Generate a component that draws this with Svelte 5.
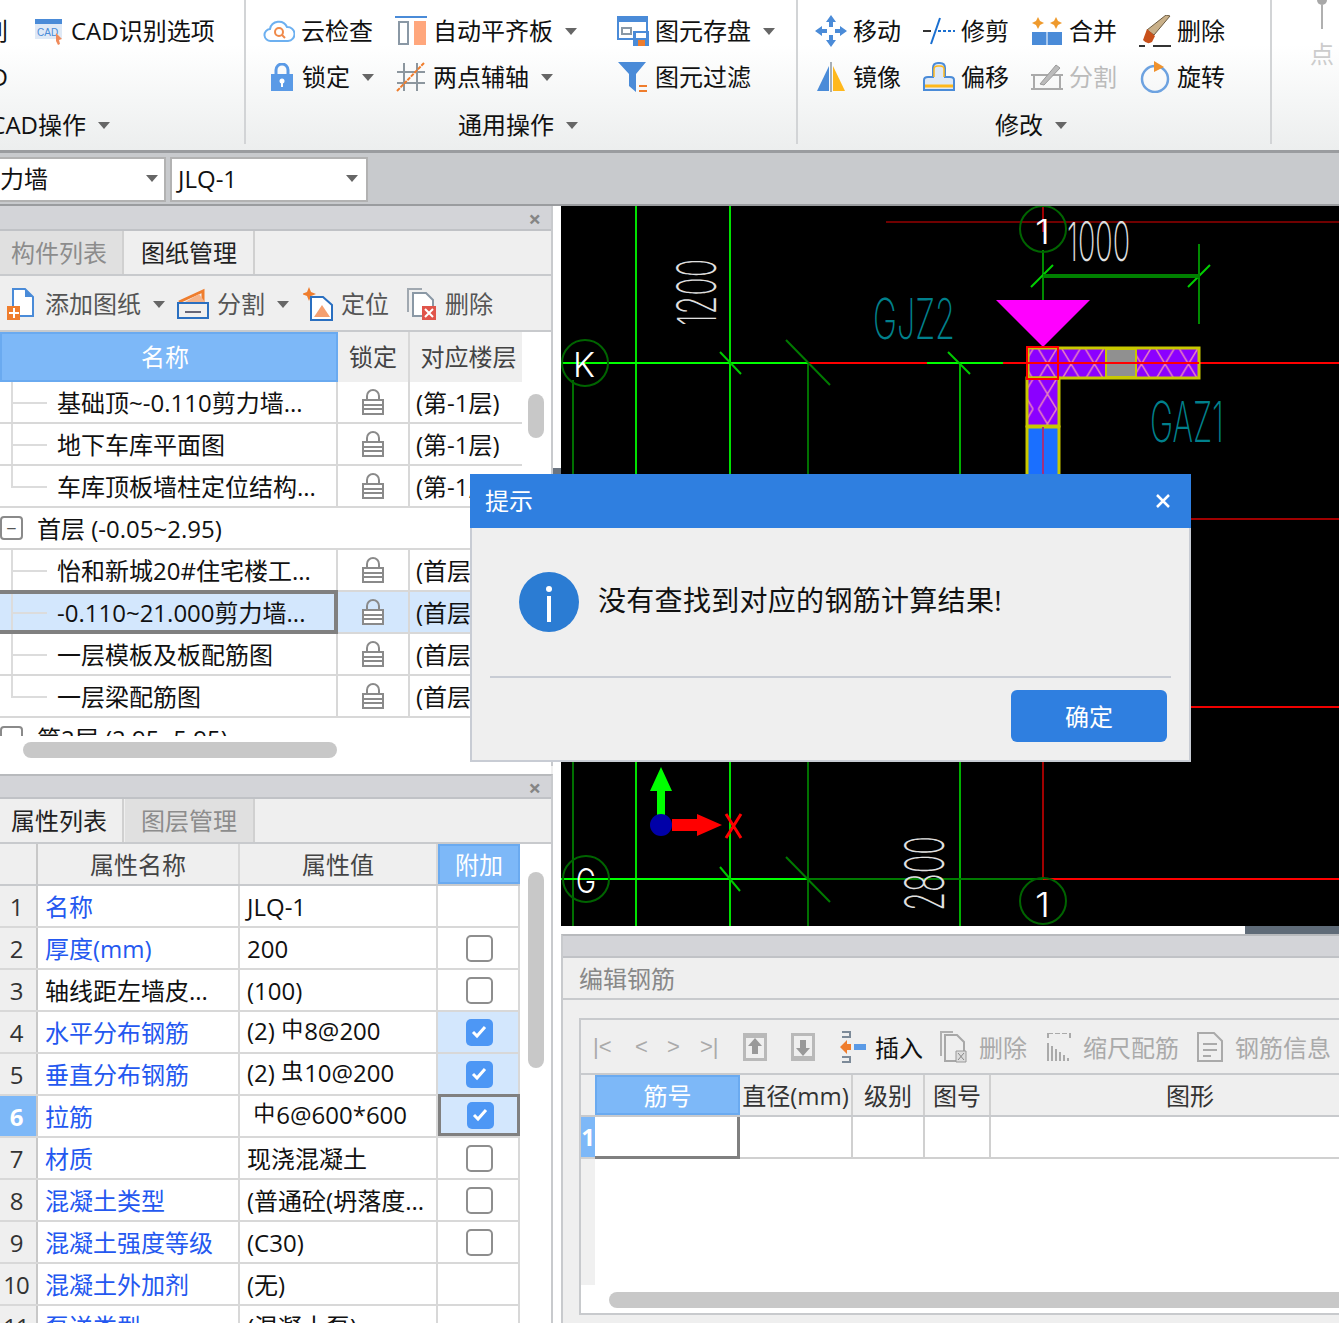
<script>
	const drawings = [
		{ name: '基础顶~-0.110剪力墙...', floor: '(第-1层)' },
		{ name: '地下车库平面图', floor: '(第-1层)' },
		{ name: '车库顶板墙柱定位结构...', floor: '(第-1层)', last: true },
		{ group: '首层 (-0.05~2.95)' },
		{ name: '怡和新城20#住宅楼工...', floor: '(首层)' },
		{ name: '-0.110~21.000剪力墙...', floor: '(首层)', selected: true },
		{ name: '一层模板及板配筋图', floor: '(首层)' },
		{ name: '一层梁配筋图', floor: '(首层)', last: true },
		{ group: '第2层 (2.95~5.95)' }
	];

	const props = [
		{ name: '名称', value: 'JLQ-1', link: true },
		{ name: '厚度(mm)', value: '200', link: true, check: 'off' },
		{ name: '轴线距左墙皮...', value: '(100)', check: 'off' },
		{ name: '水平分布钢筋', pre: '(2) ', mark: '中', value: '8@200', link: true, check: 'on' },
		{ name: '垂直分布钢筋', pre: '(2) ', mark: '虫', value: '10@200', link: true, check: 'on' },
		{ name: '拉筋', pre: ' ', mark: '中', value: '6@600*600', link: true, check: 'on', active: true },
		{ name: '材质', value: '现浇混凝土', link: true, check: 'off' },
		{ name: '混凝土类型', value: '(普通砼(坍落度...', link: true, check: 'off' },
		{ name: '混凝土强度等级', value: '(C30)', link: true, check: 'off' },
		{ name: '混凝土外加剂', value: '(无)', link: true },
		{ name: '泵送类型', value: '(混凝土泵)', link: true }
	];
</script>

{#snippet caret()}
	<i class="caret"></i>
{/snippet}

{#snippet padlock()}
	<svg width="22" height="26" viewBox="0 0 22 26">
		<path d="M5 11V7a6 6 0 0 1 12 0v4" fill="none" stroke="#8a8a8a" stroke-width="2" />
		<path d="M1 11h20v14H1z" fill="#fff" stroke="#8a8a8a" stroke-width="2" />
		<path d="M1 16h20M1 20h20" stroke="#8a8a8a" stroke-width="2" />
	</svg>
{/snippet}

<div class="app">
	<header class="ribbon">
		<section class="group g1">
			<div class="cols">
				<div class="col c-clip">
					<div class="tool end">识别</div>
					<div class="tool end">CAD</div>
				</div>
				<div class="col">
					<div class="tool">
						<span class="ico">
							<svg width="30" height="28" viewBox="0 0 30 28">
								<path d="M1 2h27v20H1z" fill="#dfe9f6" />
								<path d="M1 2h27v5H1z" fill="#4a8bd8" />
								<text x="3" y="19" class="tiny">CAD</text>
								<path d="M22 16l6 6-3 1 1 4-2 1-2-4z" fill="#f08a5a" />
							</svg>
						</span>
						CAD识别选项
					</div>
				</div>
			</div>
			<div class="label l1">CAD操作{@render caret()}</div>
		</section>

		<section class="group g2">
			<div class="cols">
				<div class="col w132">
					<div class="tool">
						<span class="ico">
							<svg width="32" height="24" viewBox="0 0 32 24">
								<path d="M8 22a6 6 0 0 1-1-12 9 9 0 0 1 17-2 7 7 0 0 1 1 14z" fill="#fff" stroke="#6db0f0" stroke-width="2" />
								<circle cx="16" cy="13" r="4" fill="none" stroke="#f08a4a" stroke-width="2" />
								<path d="M19 16l3 3" stroke="#f08a4a" stroke-width="2" />
							</svg>
						</span>
						云检查
					</div>
					<div class="tool">
						<span class="ico lockbox">
							<svg width="22" height="28" viewBox="0 0 22 28">
								<path d="M5 12V7a6 6 0 0 1 12 0v5" fill="none" stroke="#5a9ae6" stroke-width="3" />
								<path d="M0 11h22v17H0z" fill="#5a9ae6" />
								<circle cx="11" cy="18" r="2.5" fill="#fff" />
								<path d="M10 19h2v5h-2z" fill="#fff" />
							</svg>
						</span>
						锁定{@render caret()}
					</div>
				</div>
				<div class="col w222">
					<div class="tool">
						<span class="ico">
							<svg width="32" height="30" viewBox="0 0 32 30">
								<path d="M0 0h32v2H0z" fill="#4a8bd8" />
								<path d="M4 6h9v22H4z" fill="#fff" stroke="#8a98a5" stroke-width="2" />
								<path d="M19 5h12v24H19z" fill="#ffa77d" />
							</svg>
						</span>
						自动平齐板{@render caret()}
					</div>
					<div class="tool">
						<span class="ico">
							<svg width="30" height="30" viewBox="0 0 30 30">
								<path d="M8 1v28M21 1v28M1 10h28M1 21h28" stroke="#8c969e" stroke-width="2" />
								<path d="M1 29L28 1" stroke="#ef7d2d" stroke-width="2" stroke-dasharray="4 1" />
							</svg>
						</span>
						两点辅轴{@render caret()}
					</div>
				</div>
				<div class="col">
					<div class="tool">
						<span class="ico">
							<svg width="32" height="30" viewBox="0 0 32 30">
								<path d="M1 1h29v22H1z" fill="#fff" stroke="#4a8bd8" stroke-width="2" />
								<path d="M1 1h29v5H1z" fill="#4a8bd8" />
								<path d="M5 12h9v6H5z" fill="none" stroke="#8a98a5" stroke-width="2" />
								<path d="M16 15h16v15H16z" fill="#4a8bd8" />
								<path d="M19 17h10v5H19z" fill="#fff" />
								<path d="M21 24h7v6h-7z" fill="#ef7d2d" />
							</svg>
						</span>
						图元存盘{@render caret()}
					</div>
					<div class="tool">
						<span class="ico">
							<svg width="30" height="32" viewBox="0 0 30 32">
								<path d="M0 1h28L18 13v18l-7-6V13z" fill="#4a8bd8" />
								<path d="M21 24h8v2h-8zM21 29h8v2h-8z" fill="#ef7d2d" />
							</svg>
						</span>
						图元过滤
					</div>
				</div>
			</div>
			<div class="label pull">通用操作{@render caret()}</div>
		</section>

		<section class="group g3">
			<div class="cols">
				<div class="col w108">
					<div class="tool">
						<span class="ico">
							<svg width="32" height="32" viewBox="0 0 32 32">
								<path d="M16 0l5 7h-3v7h7v-3l7 5-7 5v-3h-7v7h3l-5 7-5-7h3v-7H7v3l-7-5 7-5v3h7V7h-3z" fill="#4a8bd8" />
								<path d="M12 12h8v8h-8z" fill="#fff" />
							</svg>
						</span>
						移动
					</div>
					<div class="tool">
						<span class="ico">
							<svg width="30" height="32" viewBox="0 0 30 32">
								<path d="M15 1v30" stroke="#8c969e" stroke-width="1.5" />
								<path d="M1 30L13 5v25z" fill="#4a8bd8" />
								<path d="M17 5l12 25H17z" fill="#ffb81c" />
							</svg>
						</span>
						镜像
					</div>
				</div>
				<div class="col w108">
					<div class="tool">
						<span class="ico">
							<svg width="32" height="28" viewBox="0 0 32 28">
								<path d="M0 14h8" stroke="#333" stroke-width="2" />
								<path d="M17 1L8 27" stroke="#1a6fd0" stroke-width="2" />
								<path d="M15 14h17" stroke="#1a6fd0" stroke-width="2" stroke-dasharray="3 2" />
							</svg>
						</span>
						修剪
					</div>
					<div class="tool">
						<span class="ico">
							<svg width="32" height="30" viewBox="0 0 32 30">
								<path d="M1 28V18q0-3 4-3h5V6q0-5 5-5h2q5 0 5 5v9h5q4 0 4 3v10z" fill="#dfe9f6" stroke="#4a8bd8" stroke-width="2" />
								<path d="M2 24h28" stroke="#ffb81c" stroke-width="3" />
								<path d="M11 15V7q0-3 4-3h2q4 0 4 3v8" fill="none" stroke="#ffb81c" stroke-width="1.5" />
							</svg>
						</span>
						偏移
					</div>
				</div>
				<div class="col w108">
					<div class="tool">
						<span class="ico">
							<svg width="30" height="28" viewBox="0 0 30 28">
								<path d="M6 0l2 4 4 2-4 2-2 4-2-4-4-2 4-2zM24 0l2 4 4 2-4 2-2 4-2-4-4-2 4-2z" fill="#ef9a2d" />
								<path d="M0 15h30v13H0z" fill="#4a8bd8" />
								<path d="M14 15h2v13h-2z" fill="#a8c8ee" />
							</svg>
						</span>
						合并
					</div>
					<div class="tool faded">
						<span class="ico">
							<svg width="32" height="30" viewBox="0 0 32 30">
								<path d="M3 13h26v14H3z" fill="none" stroke="#aaa" stroke-width="2" />
								<path d="M0 13h6M26 13h6M0 27h6M26 27h6" stroke="#aaa" stroke-width="2" />
								<path d="M9 22L25 3l4 3-16 17z" fill="#bbb" stroke="#999" />
							</svg>
						</span>
						分割
					</div>
				</div>
				<div class="col">
					<div class="tool">
						<span class="ico">
							<svg width="32" height="32" viewBox="0 0 32 32">
								<path d="M31 1L15 20l-7-5L27 0z" fill="#c9b089" stroke="#6a5a40" />
								<path d="M8 14l8 7-3 6q-5 3-9-2z" fill="#c8501a" />
								<path d="M0 31h6M14 31h18" stroke="#333" stroke-width="2" />
							</svg>
						</span>
						删除
					</div>
					<div class="tool">
						<span class="ico">
							<svg width="30" height="32" viewBox="0 0 30 32">
								<circle cx="15" cy="18" r="13" fill="none" stroke="#6da2e0" stroke-width="2.5" />
								<path d="M14 0v11l10-5z" fill="#f0922d" />
							</svg>
						</span>
						旋转
					</div>
				</div>
			</div>
			<div class="label pull">修改{@render caret()}</div>
		</section>

		<section class="g4">
			<i class="knob"></i>
			<i class="stem"></i>
			<span class="dim">点</span>
		</section>
	</header>

	<div class="selects">
		<div class="select first"><span class="cut">剪力墙</span>{@render caret()}</div>
		<div class="select second"><span>JLQ-1</span>{@render caret()}</div>
	</div>

	<main class="main">
		<aside class="left">
			<section class="panel a">
				<div class="ptitle"><span class="close">×</span></div>
				<div class="tabs">
					<div class="tab off">构件列表</div>
					<div class="tab">图纸管理</div>
				</div>
				<div class="ptools">
					<span class="ptool t1">
						<svg width="28" height="32" viewBox="0 0 28 32">
							<path d="M6 1h12l8 8v19H6z" fill="#fff" stroke="#4a8bd8" stroke-width="2" />
							<path d="M18 1v8h8z" fill="#4a8bd8" />
							<path d="M0 18h13v14H0z" fill="#ef7d2d" />
							<path d="M6 20h2v10H6zM2 24h10v2H2z" fill="#fff" />
						</svg>
						<b>添加图纸</b>{@render caret()}
					</span>
					<span class="ptool t2">
						<svg width="32" height="32" viewBox="0 0 32 32">
							<path d="M2 14L26 3v12" fill="none" stroke="#ef7d2d" stroke-width="3" />
							<path d="M1 15h30v15H1z" fill="none" stroke="#2a6fc0" stroke-width="2" />
							<path d="M8 14l14-8 6 8z" fill="#f5b48a" />
							<path d="M8 24h16" stroke="#667" stroke-width="2" />
						</svg>
						<b>分割</b>{@render caret()}
					</span>
					<span class="ptool t3">
						<svg width="30" height="34" viewBox="0 0 30 34">
							<path d="M6 0l2 5 5 2-5 2-2 5-2-5-5-2 5-2z" fill="#ef7d2d" />
							<path d="M8 10h12l9 8v15H8z" fill="#fff" stroke="#2a6fc0" stroke-width="2" />
							<path d="M11 30l8-12 8 12z" fill="#f5a070" />
						</svg>
						<b>定位</b>
					</span>
					<span class="ptool t4">
						<svg width="30" height="32" viewBox="0 0 30 32">
							<path d="M1 24V1h14" fill="none" stroke="#a0a8b0" stroke-width="2" />
							<path d="M6 5h13l7 7v16H6z" fill="#fff" stroke="#8a98a5" stroke-width="2" />
							<path d="M15 18h14v14H15z" fill="#e0544a" />
							<path d="M18 21l8 8M26 21l-8 8" stroke="#fff" stroke-width="2" />
						</svg>
						<b>删除</b>
					</span>
				</div>
				<div class="tablewrap">
					<div class="drow head">
						<div class="dname sel">名称</div>
						<div class="dlock">锁定</div>
						<div class="dfloor">对应楼层</div>
					</div>
					<div class="drows">
						{#each drawings as row}
							{#if row.group}
								<div class="grouprow">
									<i class="box">−</i>
									<span>{row.group}</span>
								</div>
							{:else}
								<div class="drow" class:picked={row.selected}>
									<div class="dname tree" class:last={row.last}>{row.name}</div>
									<div class="dlock">{@render padlock()}</div>
									<div class="dfloor left-text">{row.floor}</div>
								</div>
							{/if}
						{/each}
					</div>
					<div class="hscroll"><i></i></div>
					<i class="vthumb"></i>
				</div>
			</section>

			<section class="panel b">
				<div class="ptitle"><span class="close">×</span></div>
				<div class="tabs">
					<div class="tab">属性列表</div>
					<div class="tab off">图层管理</div>
				</div>
				<div class="tablewrap">
					<div class="prow head">
						<div class="pno"></div>
						<div class="pname center">属性名称</div>
						<div class="pval center">属性值</div>
						<div class="padd sel">附加</div>
					</div>
					{#each props as row, i}
						<div class="prow">
							<div class="pno" class:sel={row.active}>{i + 1}</div>
							<div class="pname" class:link={row.link}>{row.name}</div>
							<div class="pval"><span class:lift={row.mark}>{row.pre ?? ''}{#if row.mark}<span class="mark">{row.mark}</span>{/if}{row.value}</span></div>
							<div class="padd" class:tint={row.check === 'on'} class:focus={row.active}>
								{#if row.check === 'on'}
									<span class="chk on">
										<svg width="16" height="14" viewBox="0 0 16 14"><path d="M2 7l4 4 8-9" fill="none" stroke="#fff" stroke-width="3" /></svg>
									</span>
								{:else if row.check === 'off'}
									<span class="chk"></span>
								{/if}
							</div>
						</div>
					{/each}
					<i class="vthumb long"></i>
				</div>
			</section>
		</aside>

		<div class="vstrip"><i></i></div>

		<div class="right">
			<svg class="canvas" width="778" height="720" viewBox="561 206 778 720">
				<defs>
					<pattern id="hatch" x="1059" y="349" width="23.5" height="30" patternUnits="userSpaceOnUse">
						<path d="M0 0h24v30H0z" fill="#8b00ff" />
						<path d="M3 0l18 30M21 0L3 30" stroke="#e87fc0" stroke-width="1.5" />
					</pattern>
				</defs>
				<rect x="561" y="206" width="778" height="720" fill="#000" />

				<g stroke-width="2" fill="none">
					<path d="M636 206v720M730 206v720" stroke="#00e000" />
					<path d="M573 380v546M808 363v563" stroke="#007000" />
					<path d="M960 363v563" stroke="#00b000" />
					<path d="M886 222h453" stroke="#700000" />
					<path d="M1043 206v26M1043 762v116" stroke="#a00000" />
					<path d="M561 363h247M927 363h76" stroke="#00ff00" />
					<path d="M808 363h119M1003 363h24M1200 363h139" stroke="#ff0000" />
					<path d="M1190 519h149" stroke="#a00000" />
					<path d="M1190 707h149" stroke="#f00000" />
					<path d="M561 879h247" stroke="#00ff00" />
					<path d="M808 879h235" stroke="#007a00" />
					<path d="M1043 879h296" stroke="#ff0000" />
					<path d="M720 352l21 22M720 867l20 24M948 352l22 22" stroke="#00c800" />
					<path d="M786 340l44 45M786 857l44 45" stroke="#007a00" />
					<path d="M1043 250v50M1199 244v80" stroke="#008a00" />
					<path d="M1031 287l22-22M1188 287l22-22" stroke="#00d000" />
				</g>
				<path d="M1043 276h157" stroke="#008000" stroke-width="4" />

				<g fill="none" stroke="#006400" stroke-width="2">
					<circle cx="1043" cy="229" r="23" />
					<circle cx="585" cy="363" r="23" />
					<circle cx="586" cy="879" r="23" />
					<circle cx="1043" cy="901" r="23" />
				</g>

				<path d="M996 300h94l-47 47z" fill="#ff00ff" />

				<rect x="1028" y="348" width="171" height="30" fill="url(#hatch)" stroke="#c8c800" stroke-width="3" />
				<rect x="1106" y="349" width="30" height="28" fill="#909090" stroke="#c8c800" stroke-width="2" />
				<rect x="1027" y="378" width="32" height="48" fill="url(#hatch)" stroke="#c8c800" stroke-width="3" />
				<rect x="1027" y="427" width="32" height="50" fill="#1a6fff" stroke="#c8c800" stroke-width="3" />
				<path d="M1043 427v50" stroke="#a03080" stroke-width="2" />
				<path d="M1028 363h171" stroke="#ff0000" stroke-width="2" />
				<rect x="1027" y="347" width="31" height="32" fill="none" stroke="#ff0000" stroke-width="2" />

				<text x="1035" y="244" textLength="15" lengthAdjust="spacingAndGlyphs" class="cad big">1</text>
				<text x="1067" y="261" textLength="63" lengthAdjust="spacingAndGlyphs" class="cad thin">1000</text>
				<text x="573" y="377" textLength="22" lengthAdjust="spacingAndGlyphs" class="cad big">K</text>
				<text x="576" y="893" textLength="20" lengthAdjust="spacingAndGlyphs" class="cad big">G</text>
				<text x="1035" y="917" textLength="15" lengthAdjust="spacingAndGlyphs" class="cad big">1</text>
				<text x="873" y="339" textLength="82" lengthAdjust="spacingAndGlyphs" class="cad teal">GJZ2</text>
				<text x="1150" y="442" textLength="74" lengthAdjust="spacingAndGlyphs" class="cad teal">GAZ1</text>
				<text transform="translate(716 326) rotate(-90)" textLength="67" lengthAdjust="spacingAndGlyphs" class="cad thin">1200</text>
				<text transform="translate(944 911) rotate(-90)" textLength="75" lengthAdjust="spacingAndGlyphs" class="cad thin">2800</text>

				<path d="M661 767l11 24h-7v26h-8v-26h-7z" fill="#00ff00" />
				<path d="M672 819h25v-5l25 11-25 11v-5h-25z" fill="#ff0000" />
				<ellipse cx="661" cy="825" rx="11" ry="11" fill="#0000a8" />
				<path d="M726 814l15 24M741 814l-15 24" stroke="#ff0000" stroke-width="3" />
			</svg>
			<div class="hstrip"><i></i></div>

			<section class="editor">
				<div class="etitle"></div>
				<div class="etab">编辑钢筋</div>
				<div class="ebody">
					<div class="ebox">
						<div class="etools">
							<span class="nav">|&lt;</span>
							<span class="nav n2">&lt;</span>
							<span class="nav n3">&gt;</span>
							<span class="nav n4">&gt;|</span>
							<svg class="eup" width="24" height="28" viewBox="0 0 24 28">
								<path d="M0 0h24v28H0z" fill="#b9b9b9" />
								<path d="M3 5h18v20H3z" fill="#efefef" />
								<path d="M12 5l7 8h-4v8H9v-8H5z" fill="#999" />
							</svg>
							<svg class="edown" width="24" height="28" viewBox="0 0 24 28">
								<path d="M0 0h24v28H0z" fill="#b9b9b9" />
								<path d="M3 3h18v20H3z" fill="#efefef" />
								<path d="M12 23l7-8h-4V7H9v8H5z" fill="#999" />
							</svg>
							<span class="etool on i1">
								<svg width="26" height="32" viewBox="0 0 26 32">
									<path d="M2 1h8v5H2M2 26h8v5H2" fill="none" stroke="#7c8a98" stroke-width="2" />
									<path d="M0 16l7-7v4h4v6H7v4z" fill="#ef7d2d" />
									<path d="M14 13h12v6H14z" fill="#5a9ae6" />
								</svg>
								<b>插入</b>
							</span>
							<span class="etool i2">
								<svg width="28" height="32" viewBox="0 0 28 32">
									<path d="M1 25V1h12" fill="none" stroke="#b0b0b0" stroke-width="2" />
									<path d="M5 4h12l7 7v19H5z" fill="none" stroke="#a8a8a8" stroke-width="2" />
									<path d="M16 20h10v11H16z" fill="#ddd" stroke="#999" />
									<path d="M18 22l6 7M24 22l-6 7" stroke="#888" />
								</svg>
								<b>删除</b>
							</span>
							<span class="etool i3">
								<svg width="24" height="28" viewBox="0 0 24 28">
									<path d="M1 0v5M1 0h22M23 0v5" fill="none" stroke="#aaa" stroke-width="2" stroke-dasharray="5 2" />
									<path d="M1 10v18M5 13v15M9 16v12M13 19v9M17 22v6M21 25v3" stroke="#aaa" stroke-width="2" />
								</svg>
								<b>缩尺配筋</b>
							</span>
							<span class="etool i4">
								<svg width="26" height="30" viewBox="0 0 26 30">
									<path d="M1 1h16l8 8v20H1z" fill="none" stroke="#aaa" stroke-width="2" />
									<path d="M6 12h14M6 18h14M6 24h8" stroke="#aaa" stroke-width="2" />
								</svg>
								<b>钢筋信息</b>
							</span>
						</div>
						<div class="erow head">
							<div class="eno"></div>
							<div class="ec c1 sel">筋号</div>
							<div class="ec c2">直径(mm)</div>
							<div class="ec c3">级别</div>
							<div class="ec c4">图号</div>
							<div class="ec c5">图形</div>
						</div>
						<div class="erow">
							<div class="eno sel">1</div>
							<div class="ec c1 focus"></div>
							<div class="ec c2"></div>
							<div class="ec c3"></div>
							<div class="ec c4"></div>
							<div class="ec c5"></div>
						</div>
						<div class="eblank"><i></i></div>
						<div class="escroll"><i></i></div>
					</div>
				</div>
			</section>
		</div>
	</main>

	<div class="dialog">
		<div class="dhead">
			<span>提示</span>
			<svg width="16" height="16" viewBox="0 0 16 16"><path d="M2 2l12 12M14 2L2 14" stroke="#fff" stroke-width="2.5" /></svg>
		</div>
		<div class="dbody">
			<svg width="60" height="60" viewBox="0 0 60 60">
				<circle cx="30" cy="30" r="30" fill="#2b7cd3" />
				<circle cx="30" cy="17" r="3" fill="#fff" />
				<path d="M28 24h4v26h-4z" fill="#fff" />
			</svg>
			<p>没有查找到对应的钢筋计算结果!</p>
		</div>
		<div class="dline"></div>
		<div class="dfoot"><button>确定</button></div>
	</div>
</div>

<style>
	:global(body) {
		margin: 0;
		background: #fff;
	}

	.app {
		position: relative;
		width: 1339px;
		height: 1323px;
		overflow: hidden;
		font-family: 'Open Sans', 'Noto Sans CJK SC', sans-serif;
		font-size: 24px;
		line-height: 1;
		color: #111;
	}

	.caret {
		display: inline-block;
		width: 0;
		height: 0;
		margin-left: 12px;
		border-left: 6px solid transparent;
		border-right: 6px solid transparent;
		border-top: 7px solid #666;
		flex: none;
	}

	/* ribbon */
	.ribbon {
		display: flex;
		height: 150px;
		background: linear-gradient(#fff 30%, #eceeee);
		border-bottom: 3px solid #9a9c9f;
	}

	.group {
		flex: none;
		height: 144px;
		border-right: 2px solid #d2d4d6;
		box-sizing: border-box;
		padding-top: 8px;
	}

	.g1 {
		width: 346px;
		margin-left: -100px;
		padding-left: 60px;
	}

	.g2 {
		width: 552px;
		padding-left: 17px;
	}

	.g3 {
		width: 474px;
		padding-left: 17px;
	}

	.g4 {
		display: flex;
		flex-direction: column;
		align-items: center;
		width: 28px;
		margin-left: 36px;
	}

	.knob {
		width: 10px;
		height: 5px;
		background: #a8a8a8;
		border-radius: 0 0 5px 5px;
	}

	.stem {
		width: 2px;
		height: 24px;
		background: #b0b0b0;
	}

	.dim {
		margin-top: 13px;
		color: #ccc;
	}

	.cols {
		display: flex;
	}

	.c-clip {
		width: 73px;
	}

	.w132 {
		width: 132px;
	}

	.w222 {
		width: 222px;
	}

	.w108 {
		width: 108px;
	}

	.tool {
		display: flex;
		align-items: center;
		height: 46px;
		white-space: nowrap;
	}

	.tool.end {
		width: 48px;
		justify-content: flex-end;
	}

	.tool.faded {
		color: #bbb;
	}

	.ico {
		display: flex;
		justify-content: center;
		align-items: center;
		width: 32px;
		height: 32px;
		margin-right: 6px;
		flex: none;
	}

	.ico.lockbox {
		justify-content: flex-end;
		margin-right: 9px;
		width: 30px;
	}

	.tiny {
		font-family: 'Liberation Sans', sans-serif;
		font-size: 10px;
		fill: #4a8bd8;
	}

	.label {
		display: flex;
		justify-content: center;
		align-items: center;
		flex: none;
		height: 50px;
		white-space: nowrap;
	}

	.label.l1 {
		justify-content: flex-end;
		padding-right: 134px;
	}

	.label.pull {
		padding-right: 23px;
	}

	/* selector bar */
	.selects {
		display: flex;
		gap: 4px;
		height: 53px;
		box-sizing: border-box;
		padding-top: 4px;
		background: #c8cacd;
		border-bottom: 2px solid #9a9c9f;
	}

	.select {
		display: flex;
		justify-content: space-between;
		align-items: center;
		height: 45px;
		box-sizing: border-box;
		padding-bottom: 2px;
		background: #fff;
		border: 2px solid #b2b2b2;
		white-space: nowrap;
	}

	.select.first {
		width: 192px;
		margin-left: -26px;
		padding-right: 6px;
	}

	.select.second {
		width: 198px;
		padding-left: 6px;
		padding-right: 8px;
	}

	/* columns */
	.main {
		display: flex;
		height: 1117px;
	}

	.left {
		display: flex;
		flex-direction: column;
		gap: 8px;
		flex: none;
		width: 553px;
		background: #f0f0f0;
	}

	.panel {
		position: relative;
		box-sizing: border-box;
		border-right: 2px solid #c8cacd;
		background: #efefef;
	}

	.panel.a {
		height: 560px;
		border-bottom: 2px solid #c8cacd;
	}

	.panel.b {
		flex: 1;
		overflow: hidden;
		border-top: 2px solid #b8babd;
	}

	.ptitle {
		display: flex;
		justify-content: flex-end;
		align-items: center;
		height: 23px;
		padding-right: 10px;
		background: #d3d4d8;
		border-bottom: 2px solid #c0c2c6;
	}

	.panel.b .ptitle {
		height: 21px;
	}

	.close {
		color: #858585;
		font-size: 22px;
		font-weight: 700;
	}

	.tabs {
		display: flex;
		gap: 1px;
		height: 43px;
		border-bottom: 2px solid #c8cacd;
	}

	.tab {
		display: flex;
		align-items: center;
		justify-content: center;
		width: 128px;
		padding-top: 1px;
		border-right: 2px solid #d0d0d0;
		color: #222;
	}

	.tab:first-child {
		width: 118px;
		padding-right: 4px;
	}

	.tab.off {
		background: #e0e0e0;
		color: #8c8c8c;
	}

	.ptools {
		display: flex;
		align-items: center;
		height: 56px;
		box-sizing: border-box;
		padding-top: 2px;
		border-bottom: 2px solid #c8cacd;
		color: #444;
	}

	.ptool {
		display: flex;
		align-items: center;
		flex: none;
	}

	.ptool b {
		font-weight: 400;
		color: #555;
		margin-left: 10px;
	}

	.t1 {
		margin-left: 7px;
	}

	.t2 {
		margin-left: 12px;
	}

	.t2 b {
		margin-left: 8px;
	}

	.t3 {
		margin-left: 14px;
	}

	.t3 b {
		margin-left: 8px;
	}

	.t4 {
		margin-left: 18px;
	}

	.t4 b {
		margin-left: 8px;
	}

	.tablewrap {
		position: relative;
		background: #fff;
		height: 100%;
	}

	.vthumb {
		position: absolute;
		left: 528px;
		top: 62px;
		width: 16px;
		height: 44px;
		border-radius: 8px;
		background: #c8c8c8;
	}

	.vthumb.long {
		top: 28px;
		height: 196px;
	}

	/* drawing list */
	.drow {
		display: flex;
		width: 522px;
		height: 42px;
		box-sizing: border-box;
		border-bottom: 2px solid #d8d8d8;
	}

	.drow.head {
		height: 50px;
		background: #efefef;
		color: #444;
		border-bottom: 0;
	}

	.drow.picked {
		background: #d3e7fd;
	}

	.dname,
	.dlock,
	.dfloor {
		display: flex;
		align-items: center;
		flex: none;
		white-space: nowrap;
		overflow: hidden;
		box-sizing: border-box;
	}

	.dname {
		width: 338px;
		justify-content: center;
		border-right: 2px solid #d8d8d8;
	}

	.dname.sel {
		border-right: 0;
		padding-right: 8px;
	}

	.sel {
		background: #7db8f8;
		color: #fff;
		box-shadow: inset 0 0 0 2px #6aaaf0;
	}

	.tree {
		position: relative;
		justify-content: flex-start;
		padding-top: 2px;
		padding-left: 57px;
		color: #111;
	}

	.tree::before {
		content: '';
		position: absolute;
		left: 11px;
		top: 0;
		width: 34px;
		height: 50%;
		border-left: 2px solid #dcdcdc;
		border-bottom: 2px solid #dcdcdc;
	}

	.tree:not(.last)::after {
		content: '';
		position: absolute;
		left: 11px;
		top: 50%;
		height: 50%;
		border-left: 2px solid #dcdcdc;
	}

	.picked .tree {
		margin-top: -2px;
		height: 44px;
		border-top: 4px solid #808080;
		border-right: 4px solid #808080;
		border-bottom: 4px solid #808080;
	}

	.dlock {
		width: 72px;
		justify-content: center;
		border-right: 2px solid #d8d8d8;
	}

	.dfloor {
		width: 112px;
		justify-content: center;
		padding-left: 5px;
	}

	.dfloor.left-text {
		justify-content: flex-start;
		padding-top: 2px;
		padding-left: 6px;
	}

	.drows {
		height: 354px;
		overflow: hidden;
	}

	.grouprow {
		display: flex;
		align-items: center;
		gap: 14px;
		width: 522px;
		height: 42px;
		box-sizing: border-box;
		border-bottom: 2px solid #d8d8d8;
	}

	.grouprow span {
		padding-top: 2px;
	}

	.box {
		display: flex;
		justify-content: center;
		align-items: center;
		flex: none;
		width: 23px;
		height: 24px;
		box-sizing: border-box;
		border: 2px solid #8a8a8a;
		border-radius: 4px;
		font-style: normal;
		font-size: 18px;
		color: #555;
	}

	.hscroll {
		padding: 6px 0 0 23px;
	}

	.hscroll i {
		display: block;
		width: 314px;
		height: 16px;
		border-radius: 8px;
		background: #c8c8c8;
	}

	/* property grid */
	.prow {
		display: flex;
		width: 520px;
		height: 42px;
		box-sizing: border-box;
		border-bottom: 2px solid #d8d8d8;
	}

	.prow.head {
		background: #efefef;
		color: #444;
		border-bottom: 2px solid #c8cacd;
	}

	.pno,
	.pname,
	.pval,
	.padd {
		display: flex;
		align-items: center;
		flex: none;
		box-sizing: border-box;
		white-space: pre;
	}

	.pno {
		width: 38px;
		justify-content: center;
		padding-right: 4px;
		padding-top: 2px;
		background: #efefef;
		color: #333;
		border-right: 2px solid #c8c8c8;
		letter-spacing: -1px;
	}

	.pno.sel {
		color: #fff;
		font-weight: 700;
		box-shadow: none;
		background: #7db8f8;
	}

	.pname {
		width: 202px;
		padding-top: 2px;
		padding-left: 7px;
		border-right: 2px solid #d8d8d8;
	}

	.pname.link {
		color: #2458f0;
	}

	.pval {
		width: 198px;
		padding-top: 2px;
		padding-left: 7px;
		border-right: 2px solid #d8d8d8;
	}

	.center {
		justify-content: center;
		padding-left: 0;
	}

	.padd {
		width: 82px;
		justify-content: center;
		padding-left: 2px;
		border-right: 2px solid #d8d8d8;
	}

	.padd.sel {
		border-right: 0;
		padding-left: 0;
		padding-top: 2px;
	}

	.padd.tint {
		background: #d3e7fd;
	}

	.padd.focus {
		margin-top: -2px;
		height: 42px;
		box-shadow: inset 0 0 0 3px #808080;
		border-right: 0;
	}

	.lift {
		position: relative;
		top: -2px;
	}

	.mark {
		position: relative;
		top: -3px;
		font-size: 22px;
		margin-right: 1px;
	}

	.chk {
		display: flex;
		justify-content: center;
		align-items: center;
		width: 27px;
		height: 27px;
		box-sizing: border-box;
		border: 2px solid #8e8e8e;
		border-radius: 5px;
		background: #fff;
	}

	.chk.on {
		border: 0;
		background: #4d97f5;
	}

	/* splitters */
	.vstrip {
		flex: none;
		width: 8px;
		background: #fff;
	}

	.vstrip i {
		display: block;
		height: 240px;
		margin-top: 262px;
		background: #6a7480;
	}

	.right {
		flex: 1;
		min-width: 0;
		display: flex;
		flex-direction: column;
	}

	.canvas {
		display: block;
		flex: none;
	}

	.cad {
		font-family: Inter, 'Liberation Sans', sans-serif;
		fill: #e4e4e4;
	}

	.cad.big {
		font-size: 34px;
		font-weight: 300;
		fill: #fff;
	}

	.cad.thin {
		font-size: 54px;
		font-weight: 200;
		fill: #e0e0e0;
	}

	.cad.teal {
		font-size: 56px;
		font-weight: 200;
		fill: #00808c;
	}

	.hstrip {
		display: flex;
		justify-content: flex-end;
		flex: none;
		height: 8px;
		background: #fff;
	}

	.hstrip i {
		width: 94px;
		background: #5f6b78;
	}

	/* rebar editor */
	.editor {
		flex: 1;
		min-height: 0;
		display: flex;
		flex-direction: column;
		background: #efefef;
		border-left: 2px solid #c8cacd;
		border-top: 2px solid #b8babd;
	}

	.etitle {
		flex: none;
		height: 20px;
		background: #d3d4d8;
		border-bottom: 2px solid #c0c2c6;
	}

	.etab {
		display: flex;
		align-items: center;
		flex: none;
		height: 38px;
		padding-top: 2px;
		padding-left: 16px;
		color: #888;
		border-bottom: 2px solid #c8cacd;
	}

	.ebody {
		padding: 18px 0 0 16px;
	}

	.ebox {
		width: 800px;
		height: 297px;
		box-sizing: border-box;
		background: #fff;
		border: 2px solid #c8cacd;
		border-right: 0;
	}

	.etools {
		display: flex;
		align-items: center;
		height: 55px;
		box-sizing: border-box;
		padding-top: 1px;
		padding-left: 12px;
		background: #efefef;
		border-bottom: 2px solid #c8cacd;
		color: #aaa;
	}

	.nav {
		font-family: 'Liberation Sans', sans-serif;
		font-size: 22px;
		width: 20px;
		white-space: nowrap;
	}

	.n2 {
		margin-left: 22px;
		width: 12px;
	}

	.n3 {
		margin-left: 20px;
		width: 12px;
	}

	.n4 {
		margin-left: 21px;
	}

	.eup {
		margin-left: 23px;
	}

	.edown {
		margin-left: 24px;
	}

	.etool {
		display: flex;
		align-items: center;
		flex: none;
		white-space: nowrap;
	}

	.etool b {
		font-weight: 400;
		margin-left: 12px;
		padding-top: 1px;
		color: #aaa;
	}

	.etool.on b {
		color: #111;
		margin-left: 9px;
	}

	.i1 {
		margin-left: 25px;
	}

	.i2 {
		margin-left: 17px;
	}

	.i2 b {
		margin-left: 11px;
	}

	.i3 {
		margin-left: 20px;
	}

	.i4 {
		margin-left: 18px;
	}

	.erow {
		display: flex;
		height: 42px;
		box-sizing: border-box;
		border-bottom: 2px solid #d0d0d0;
	}

	.erow.head {
		background: #efefef;
		color: #333;
		border-bottom: 2px solid #c8cacd;
	}

	.eno {
		flex: none;
		display: flex;
		align-items: center;
		justify-content: center;
		width: 14px;
		overflow: hidden;
		background: #efefef;
		font-weight: 700;
	}

	.eno.sel {
		box-shadow: none;
		background: #7db8f8;
	}

	.ec {
		display: flex;
		align-items: center;
		justify-content: center;
		flex: none;
		box-sizing: border-box;
		padding-top: 2px;
		white-space: nowrap;
		border-right: 2px solid #d0d0d0;
	}

	.ec.sel {
		border-right: 0;
	}

	.ec.focus {
		border-right: 3px solid #808080;
		border-bottom: 3px solid #808080;
		margin-bottom: -2px;
	}

	.c1 {
		width: 145px;
	}

	.c2 {
		width: 113px;
	}

	.c3 {
		width: 72px;
	}

	.c4 {
		width: 66px;
	}

	.c5 {
		width: 400px;
	}

	.eblank {
		height: 126px;
	}

	.eblank i {
		display: block;
		width: 14px;
		height: 100%;
		background: #f0f0f0;
	}

	.escroll {
		padding: 7px 0 0 28px;
	}

	.escroll i {
		display: block;
		height: 16px;
		border-radius: 8px;
		background: #c8c8c8;
	}

	/* message box */
	.dialog {
		position: absolute;
		left: 470px;
		top: 474px;
		display: flex;
		flex-direction: column;
		width: 721px;
		height: 288px;
		box-sizing: border-box;
		background: #efefef;
		border: 2px solid #c8ccd4;
		border-top: 0;
	}

	.dhead {
		display: flex;
		justify-content: space-between;
		align-items: center;
		flex: none;
		height: 54px;
		margin: 0 -2px;
		padding: 0 20px 0 15px;
		background: #2f7fe0;
		color: #fff;
	}

	.dbody {
		display: flex;
		align-items: center;
		gap: 19px;
		flex: none;
		height: 148px;
		box-sizing: border-box;
		padding: 0 0 0 47px;
	}

	.dbody p {
		margin: 0 0 4px;
		font-size: 28px;
		letter-spacing: 0.3px;
		color: #111;
	}

	.dline {
		flex: none;
		height: 2px;
		margin: 0 18px;
		background: #c8ccd4;
	}

	.dfoot {
		display: flex;
		justify-content: flex-end;
		padding: 12px 22px 0 0;
	}

	button {
		width: 156px;
		height: 52px;
		padding: 2px 0 0;
		border: 0;
		border-radius: 6px;
		background: #2f7fe0;
		color: #fff;
		font: inherit;
	}
</style>
